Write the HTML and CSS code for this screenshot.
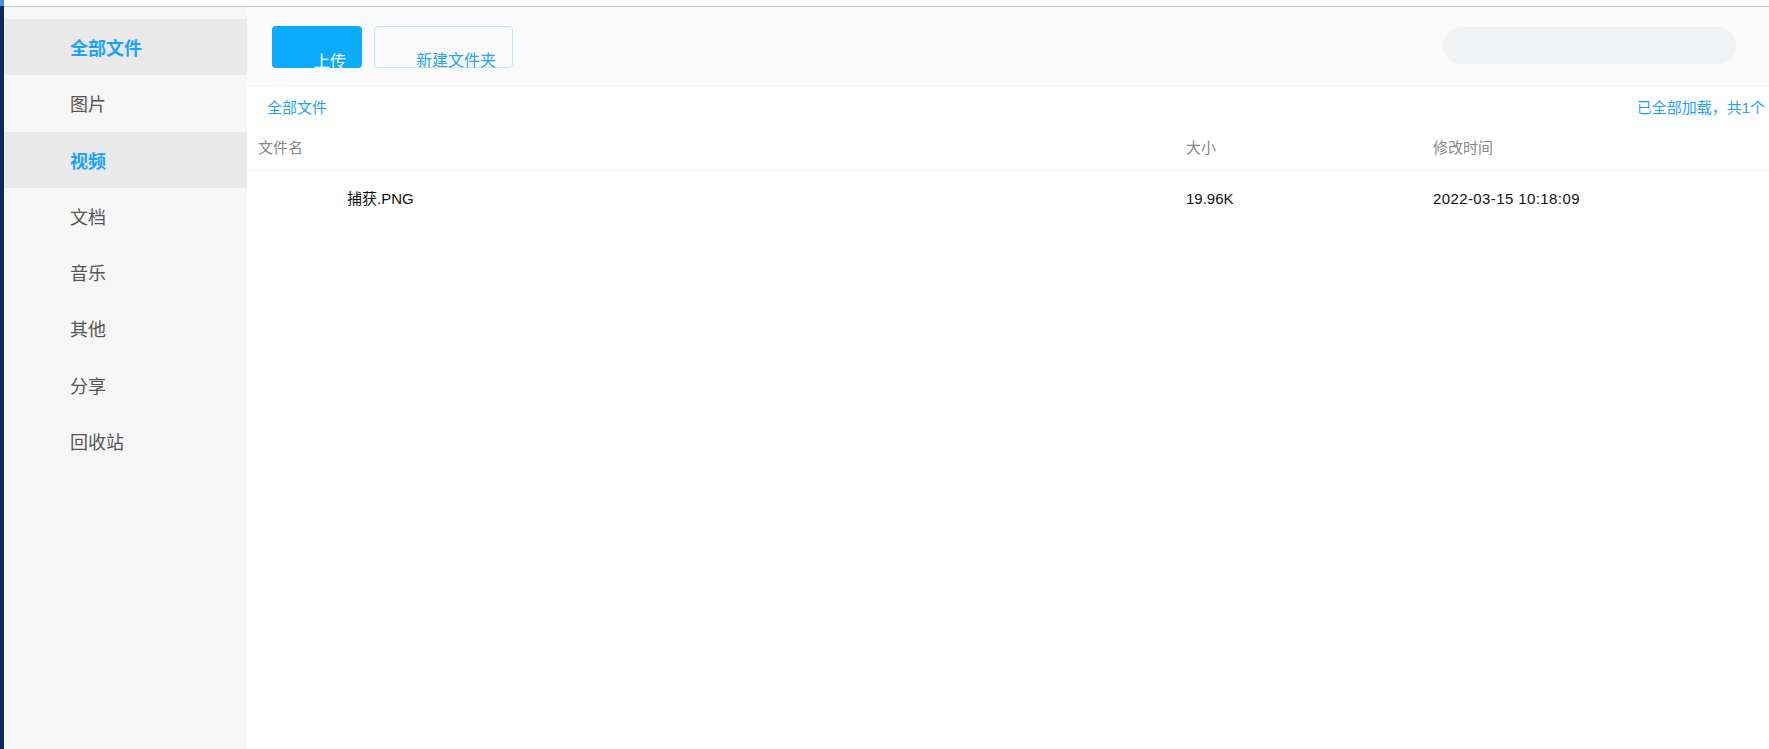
FILE: index.html
```html
<!doctype html>
<html>
<head>
<meta charset="utf-8">
<title>网盘 - 全部文件</title>
<link rel="stylesheet" href="styles.css">
</head>
<body>
  <div class="edge"></div>
  <div class="page">
    <div class="topline"></div>
    <div class="app">
      <div class="side">
        <div class="nav on">全部文件</div>
        <div class="nav">图片</div>
        <div class="nav on">视频</div>
        <div class="nav">文档</div>
        <div class="nav">音乐</div>
        <div class="nav">其他</div>
        <div class="nav">分享</div>
        <div class="nav">回收站</div>
      </div>

      <div class="main">
        <div class="toolbar">
          <div class="btn upload">上传</div>
          <div class="btn newdir">新建文件夹</div>
          <div class="search"></div>
        </div>

        <div class="crumb">
          <span class="path">全部文件</span>
          <span class="count">已全部加载，共1个</span>
        </div>

        <div class="row thead">
          <div class="c-name">文件名</div>
          <div class="c-size">大小</div>
          <div class="c-time">修改时间</div>
        </div>
        <div class="row item">
          <div class="c-name"><span class="fname">捕获.PNG</span></div>
          <div class="c-size">19.96K</div>
          <div class="c-time">2022-03-15 10:18:09</div>
        </div>
      </div>
    </div>
  </div>
</body>
</html>
```

FILE: styles.css
```css
html, body { width:100%; height:100%; margin:0; padding:0; background:#fff; overflow:hidden; }

body {
  display:flex;
  font-family: "Liberation Sans", "Noto Sans CJK SC", sans-serif;
}

.edge {
  width:4px;
  flex:none;
  background:linear-gradient(180deg, #4a8fe0 0, #4a8fe0 6px, #0b2c58 6px);
}

.page {
  flex:1;
  display:flex;
  flex-direction:column;
  min-width:0;
}

.topline {
  height:6px;
  border-bottom:1px solid #c6c6c6;
  flex:none;
}

.app {
  flex:1;
  display:flex;
}

/* left menu */
.side {
  width:243px;
  flex:none;
  background:#f6f6f6;
  padding-top:12px;
}

.nav {
  height:56.3px;
  box-sizing:border-box;
  padding:4px 0 0 66px;
  line-height:52.3px;
  font-size:18px;
  color:#555;
}

.nav.on {
  background:#e9e9e9;
  color:#1aa3fb;
  font-weight:bold;
}

/* right part */
.main {
  flex:1;
  min-width:0;
}

.toolbar {
  height:79px;
  background:#fafafa;
  border-bottom:1px solid #eeeeee;
  display:flex;
  align-items:flex-start;
  padding:19px 33px 0 25px;
  box-sizing:border-box;
}

.btn {
  height:42px;
  box-sizing:border-box;
  border-radius:4px;
  font-size:16px;
  line-height:16px;
}

.upload {
  width:90px;
  background:#0babff;
  color:#fff;
  padding:28px 0 0 42px;
  overflow:hidden;
}

.newdir {
  width:139px;
  margin-left:12px;
  border:1px solid #bfe5fb;
  color:#2aa2ec;
  padding:26px 0 0 41px;
  white-space:nowrap;
}

.search {
  margin-left:auto;
  margin-top:1px;
  width:293px;
  height:37px;
  border-radius:19px;
  background:#f0f1f3;
}

.crumb {
  height:44px;
  padding:0 4px 0 20px;
  box-sizing:border-box;
  line-height:43px;
  display:flex;
  justify-content:space-between;
  font-size:15px;
  color:#1fa0f0;
}

.row {
  display:flex;
  font-size:15px;
  padding-left:11px;
}

.thead {
  height:41px;
  padding-top:1px;
  box-sizing:border-box;
  line-height:33px;
  color:#888;
  border-bottom:1px solid #eef3f8;
}

.item {
  height:56px;
  line-height:56px;
  color:#111;
}

.c-name { width:928px; }
.c-size { width:247px; }
.c-time { flex:1; }

.fname { padding-left:89px; }

.item .c-time { letter-spacing:0.4px; }
```
